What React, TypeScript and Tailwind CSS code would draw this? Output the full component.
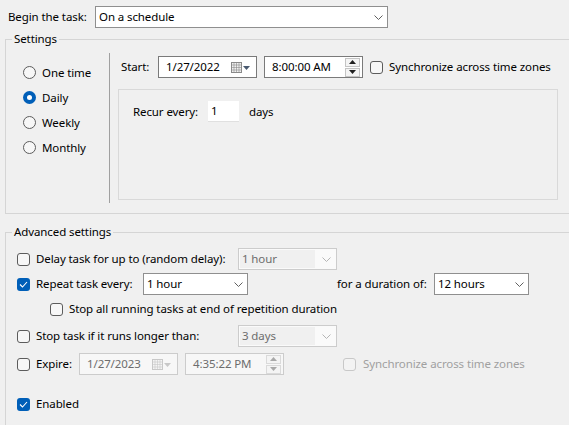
import React from "react";

const Chevron = ({ color = "#606060" }: { color?: string }) => (
  <svg width="9" height="5" viewBox="0 0 9 5" className="shrink-0">
    <path d="M0.5 0.5 L4.5 4.5 L8.5 0.5" stroke={color} fill="none" strokeWidth="1" />
  </svg>
);

const Combo = ({ value, w, disabled = false }: { value: string; w: string; disabled?: boolean }) =>
  disabled ? (
    <div className={`${w} h-[22px] flex items-stretch border border-[#cccccc] bg-[#fafafa]`}>
      <div className="flex-1 bg-[#f0f0f0] flex items-center pl-[2px] m-[1px] text-[#6d6d6d]">{value}</div>
      <div className="w-[20px] flex items-center justify-center">
        <Chevron color="#b5b5b5" />
      </div>
    </div>
  ) : (
    <div className={`${w} h-[22px] flex items-center justify-between border border-[#8f8f8f] bg-white pl-[3px] pr-[4px]`}>
      <span>{value}</span>
      <Chevron />
    </div>
  );

const CalIcon = ({ disabled = false }: { disabled?: boolean }) => {
  const c = disabled ? "#c8c8c8" : "#8a8a8a";
  const t = disabled ? "#c8c8c8" : "#4a5a70";
  return (
    <svg width="20" height="11" viewBox="0 0 20 11" className="shrink-0">
      <rect x="0.5" y="0.5" width="10" height="10" fill={disabled ? "#f4f4f4" : "#f0f0f0"} stroke={c} />
      <path d="M3 1v9M5.5 1v9M8 1v9M1 3h9M1 5.5h9M1 8h9" stroke={c} strokeWidth="0.6" />
      <path d="M12 4h7l-3.5 4z" fill={t} />
    </svg>
  );
};

const DatePicker = ({ value, disabled = false }: { value: string; disabled?: boolean }) => (
  <div
    className={`w-[99px] h-[22px] flex items-center justify-between pl-[7px] pr-[5px] border ${
      disabled ? "border-[#cccccc] bg-[#f7f7f7] text-[#6d6d6d]" : "border-[#7a7a7a] bg-white"
    }`}
  >
    <span>{value}</span>
    <CalIcon disabled={disabled} />
  </div>
);

const Spinner = ({ disabled = false }: { disabled?: boolean }) => {
  const c = disabled ? "#a8a8a8" : "#202020";
  return (
    <div className="flex flex-col w-[15px] h-[19px] gap-[1px]">
      <div className={`flex-1 border ${disabled ? "border-[#dadada]" : "border-[#c4c4c4]"} bg-[#f4f4f4] flex items-center justify-center`}>
        <svg width="7" height="4" viewBox="0 0 7 4"><path d="M0 4h7L3.5 0z" fill={c} /></svg>
      </div>
      <div className={`flex-1 border ${disabled ? "border-[#dadada]" : "border-[#c4c4c4]"} bg-[#f4f4f4] flex items-center justify-center`}>
        <svg width="7" height="4" viewBox="0 0 7 4"><path d="M0 0h7L3.5 4z" fill={c} /></svg>
      </div>
    </div>
  );
};

const TimePicker = ({ value, disabled = false }: { value: string; disabled?: boolean }) => (
  <div
    className={`w-[99px] h-[22px] flex items-center justify-between pl-[7px] pr-[2px] border ${
      disabled ? "border-[#cccccc] bg-[#f7f7f7] text-[#6d6d6d]" : "border-[#7a7a7a] bg-white"
    }`}
  >
    <span>{value}</span>
    <Spinner disabled={disabled} />
  </div>
);

const Check = ({ checked = false, disabled = false }: { checked?: boolean; disabled?: boolean }) =>
  checked ? (
    <div className="w-[13px] h-[13px] rounded-[3px] bg-[#005fb8] flex items-center justify-center shrink-0">
      <svg width="9" height="7" viewBox="0 0 9 7">
        <path d="M1 3.5 L3.5 6 L8 1" stroke="white" strokeWidth="1.1" fill="none" />
      </svg>
    </div>
  ) : (
    <div
      className={`w-[13px] h-[13px] rounded-[3px] border shrink-0 ${
        disabled ? "border-[#c8c8c8] bg-[#f3f3f3]" : "border-[#5c5c5c] bg-[#f7f7f7]"
      }`}
    />
  );

const Radio = ({ checked = false }: { checked?: boolean }) =>
  checked ? (
    <div className="w-[13px] h-[13px] rounded-full bg-[#005fb8] flex items-center justify-center shrink-0">
      <div className="w-[5px] h-[5px] rounded-full bg-white" />
    </div>
  ) : (
    <div className="w-[13px] h-[13px] rounded-full border border-[#5c5c5c] bg-[#f7f7f7] shrink-0" />
  );

export default function App() {
  return (
    <div
      className="w-[569px] h-[425px] overflow-hidden bg-[#f0f0f0] text-[11.5px] tracking-[-0.1px] leading-[16px] text-black"
      style={{ fontFamily: '"Noto Sans", "Open Sans", sans-serif' }}
    >
      <div className="pt-[6px] pl-[8px] flex items-center">
        <span className="w-[87px]">Begin the task:</span>
        <Combo value="On a schedule" w="w-[293px]" />
      </div>

      <fieldset className="mt-[3px] ml-[5px] w-[620px] border border-[#d5d5d5] p-0">
        <legend className="ml-[6px] px-[2px] leading-[16px]">Settings</legend>
        <div className="flex pb-[10px]">
          <div className="w-[104px] border-r border-[#a0a0a0] mt-[6px] h-[150px] pl-[17px] pt-[7px] flex flex-col">
            {[
              ["One time", false],
              ["Daily", true],
              ["Weekly", false],
              ["Monthly", false],
            ].map(([l, c]) => (
              <div key={l as string} className="h-[25px] flex items-center gap-[6px]">
                <Radio checked={c as boolean} />
                <span>{l as string}</span>
              </div>
            ))}
          </div>
          <div className="pl-[8px] pt-[9px]">
            <div className="flex items-center">
              <span className="ml-[3px] w-[37px]">Start:</span>
              <DatePicker value="1/27/2022" />
              <div className="w-[7px]" />
              <TimePicker value="8:00:00 AM" />
              <div className="w-[7px]" />
              <Check />
              <span className="ml-[6px]">Synchronize across time zones</span>
            </div>
            <div className="mt-[11px] w-[440px] h-[111px] border border-[#d9d9d9]">
              <div className="flex items-center pt-[11px] pl-[14px]">
                <span className="w-[75px]">Recur every:</span>
                <div className="w-[31px] h-[21px] bg-white border-b border-[#e0e0e0] flex items-center pl-[3px]">1</div>
                <span className="ml-[10px]">days</span>
              </div>
            </div>
          </div>
        </div>
      </fieldset>

      <fieldset className="mt-[10px] ml-[5px] w-[620px] h-[300px] border border-[#d5d5d5] p-0">
        <legend className="ml-[6px] px-[2px] leading-[16px]">Advanced settings</legend>
        <div className="pl-[11px] pt-[8px] flex flex-col">
          <div className="h-[22px] flex items-center">
            <Check />
            <span className="ml-[6px] w-[202px]">Delay task for up to (random delay):</span>
            <Combo value="1 hour" w="w-[99px]" disabled />
          </div>
          <div className="mt-[3px] h-[22px] flex items-center">
            <Check checked />
            <span className="ml-[6px] w-[107px]">Repeat task every:</span>
            <Combo value="1 hour" w="w-[105px]" />
            <span className="ml-[89px] w-[97px]">for a duration of:</span>
            <Combo value="12 hours" w="w-[95px]" />
          </div>
          <div className="mt-[3px] h-[22px] flex items-center pl-[33px]">
            <Check />
            <span className="ml-[6px]">Stop all running tasks at end of repetition duration</span>
          </div>
          <div className="mt-[5px] h-[22px] flex items-center">
            <Check />
            <span className="ml-[6px] w-[202px]">Stop task if it runs longer than:</span>
            <Combo value="3 days" w="w-[99px]" disabled />
          </div>
          <div className="mt-[6px] h-[22px] flex items-center">
            <Check />
            <span className="ml-[6px] w-[43px]">Expire:</span>
            <DatePicker value="1/27/2023" disabled />
            <div className="w-[7px]" />
            <TimePicker value="4:35:22 PM" disabled />
            <div className="w-[59px]" />
            <Check disabled />
            <span className="ml-[7px] text-[#a0a0a0]">Synchronize across time zones</span>
          </div>
          <div className="mt-[18px] h-[22px] flex items-center">
            <Check checked />
            <span className="ml-[6px]">Enabled</span>
          </div>
        </div>
      </fieldset>
    </div>
  );
}
